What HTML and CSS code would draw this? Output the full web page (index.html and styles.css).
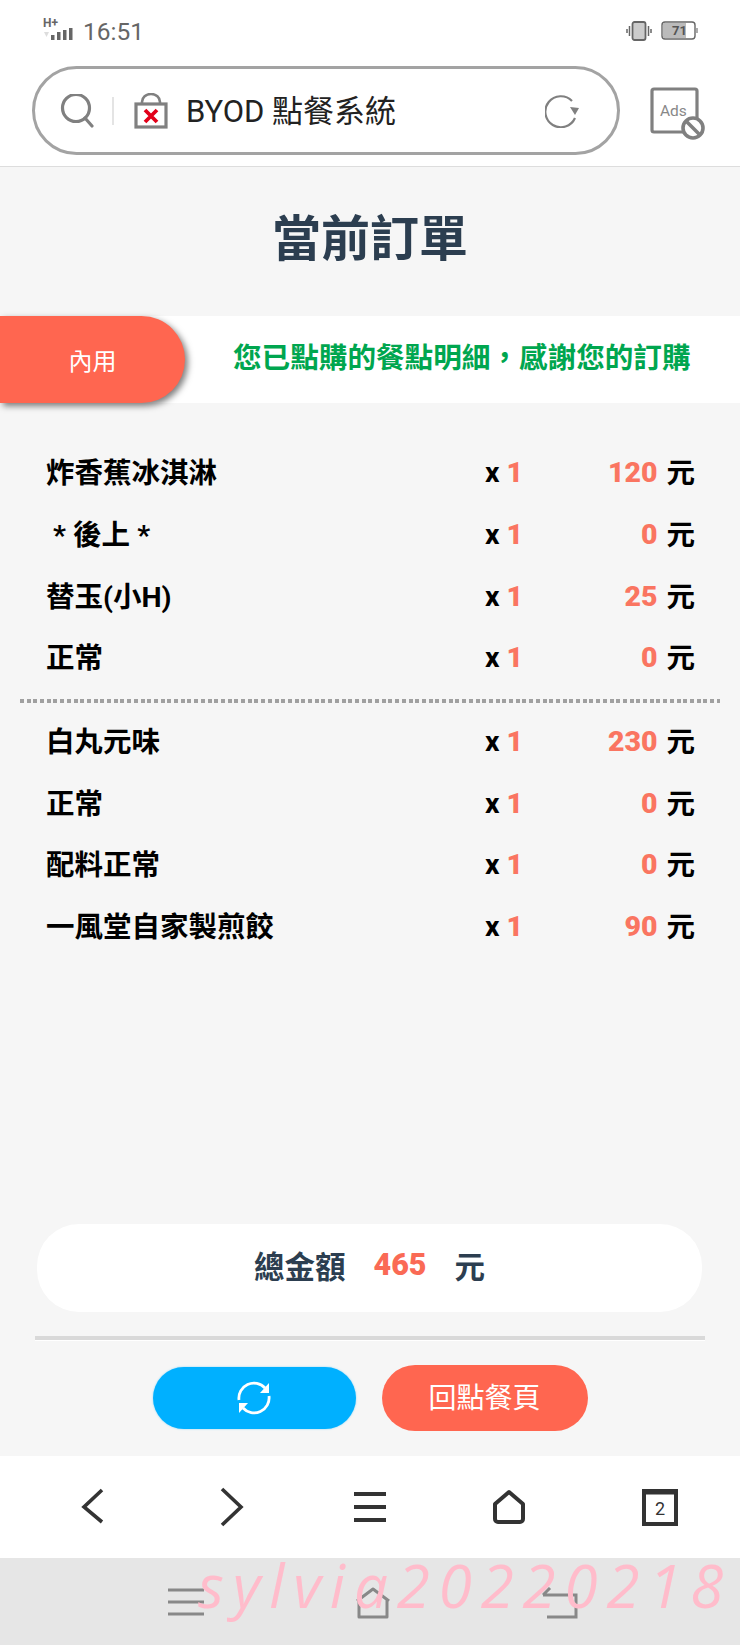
FILE: index.html
```html
<!DOCTYPE html>
<html lang="zh-Hant">
<head>
    <meta charset="UTF-8">
    <meta name="viewport" content="width=device-width, initial-scale=1.0">
    <title>BYOD 點餐系統</title>
    <link rel="stylesheet" href="styles.css">
</head>
<body>
    <header class="top">
        <div class="status">
            <div class="status-left">
                <div class="signal">
                    <span class="signal-text">H+</span>
                    <svg width="33" height="12" viewBox="0 0 33 12">
                        <path d="M1 4h5L3.500 9z" fill="#ddd"/>
                        <rect x="8" y="7" width="3.500" height="5" fill="#666"/>
                        <rect x="14" y="4" width="3.500" height="8" fill="#666"/>
                        <rect x="20" y="2" width="3.500" height="10" fill="#666"/>
                        <rect x="26" y="0" width="3.500" height="12" fill="#666"/>
                    </svg>
                </div>
                <span class="clock">16:51</span>
            </div>
            <div class="status-right">
                <svg width="26" height="20" viewBox="0 0 26 20">
                    <rect x="6.500" y="1" width="13" height="18" rx="2" fill="#ccc" stroke="#666" stroke-width="1.800"/>
                    <path d="M3.500 5v10M1 8v4M22.500 5v10M25 8v4" stroke="#666" stroke-width="1.500"/>
                </svg>
                <svg width="37" height="19" viewBox="0 0 37 19">
                    <rect x="1" y="1" width="33" height="17" rx="3" fill="#fff" stroke="#666" stroke-width="1.400"/>
                    <rect x="2" y="2" width="23" height="15" fill="#bbb"/>
                    <path d="M36 7v5" stroke="#888" stroke-width="1.400"/>
                    <text x="11" y="14" class="battery-text">71</text>
                </svg>
            </div>
        </div>
        <div class="search-row">
            <div class="search">
                <svg class="search-icon" width="34" height="34" viewBox="0 0 34 34" fill="none" stroke="#808080">
                    <circle cx="16" cy="14" r="13.500" stroke-width="3.200"/>
                    <path d="M25 24l7 8" stroke-width="3.200" stroke-linecap="round"/>
                </svg>
                <span class="search-sep"></span>
                <svg class="lock" width="34" height="36" viewBox="0 0 34 36">
                    <path d="M8 12V9a9 8 0 0 1 18 0v3" fill="none" stroke="#808080" stroke-width="2.600"/>
                    <rect x="2" y="11" width="30" height="23" fill="#fff" stroke="#808080" stroke-width="3.200"/>
                    <path d="M11 17l12 12M23 17l-12 12" stroke="#e2001a" stroke-width="3.800"/>
                </svg>
                <span class="search-text">BYOD 點餐系統</span>
                <svg class="reload" width="36" height="34" viewBox="0 0 36 34" fill="none">
                    <path d="M27 7A15.500 15.500 0 1 0 30 24" stroke="#808080" stroke-width="2.200"/>
                    <path d="M25 13l9 1-4 7z" fill="#808080"/>
                </svg>
            </div>
            <svg class="ads" width="56" height="54" viewBox="0 0 56 54">
                <rect x="2" y="2" width="45" height="43" rx="2" fill="#fff" stroke="#808080" stroke-width="3.200"/>
                <text x="10" y="29" class="ads-text">Ads</text>
                <circle cx="43" cy="41" r="10" fill="#fff" stroke="#808080" stroke-width="3.600"/>
                <path d="M36 34l14 14" stroke="#808080" stroke-width="3.600"/>
            </svg>
        </div>
    </header>

    <main class="page">
        <h1 class="title">當前訂單</h1>
        <div class="banner">
            <div class="banner-tag">內用</div>
            <p class="banner-text">您已點購的餐點明細&#xFF0C;感謝您的訂購</p>
        </div>

        <div class="order">
            <div class="row"><span>炸香蕉冰淇淋</span><span>x <b>1</b></span><b class="price">120</b><span>元</span></div>
            <div class="row"><span>&nbsp;* 後上 *</span><span>x <b>1</b></span><b class="price">0</b><span>元</span></div>
            <div class="row"><span>替玉(小H)</span><span>x <b>1</b></span><b class="price">25</b><span>元</span></div>
            <div class="row"><span>正常</span><span>x <b>1</b></span><b class="price">0</b><span>元</span></div>
            <div class="dots"></div>
            <div class="row"><span>白丸元味</span><span>x <b>1</b></span><b class="price">230</b><span>元</span></div>
            <div class="row"><span>正常</span><span>x <b>1</b></span><b class="price">0</b><span>元</span></div>
            <div class="row"><span>配料正常</span><span>x <b>1</b></span><b class="price">0</b><span>元</span></div>
            <div class="row"><span>一風堂自家製煎餃</span><span>x <b>1</b></span><b class="price">90</b><span>元</span></div>
        </div>

        <div class="total">
            <span>總金額</span><b class="total-num">465</b><span>元</span>
        </div>
        <div class="total-line"></div>
        <div class="actions">
            <button class="btn btn-blue" type="button">
                <svg width="38" height="38" viewBox="0 0 38 38" fill="none">
                    <path d="M4 21A15 15 0 0 1 30 9" stroke="#fff" stroke-width="2.800"/>
                    <path d="M34 17A15 15 0 0 1 8 29" stroke="#fff" stroke-width="2.800"/>
                    <path d="M34 4v10H25z" fill="#fff"/>
                    <path d="M4 34V24h9z" fill="#fff"/>
                </svg>
            </button>
            <button class="btn btn-red" type="button">回點餐頁</button>
        </div>
    </main>

    <nav class="browser-nav">
        <svg width="40" height="40" viewBox="0 0 40 40" fill="none" stroke="#333" stroke-width="3.600">
            <path d="M30 3L12 20l18 15"/>
        </svg>
        <svg width="40" height="40" viewBox="0 0 40 40" fill="none" stroke="#333" stroke-width="3.600">
            <path d="M11 2l19 18-19 18"/>
        </svg>
        <svg width="40" height="40" viewBox="0 0 40 40" stroke="#333" stroke-width="4">
            <path d="M4 7h32M4 20h32M4 33h32"/>
        </svg>
        <svg width="40" height="40" viewBox="0 0 40 40" fill="none" stroke="#333" stroke-width="4" stroke-linejoin="round">
            <path d="M20 5L34 17v15a3 3 0 0 1-3 3H9a3 3 0 0 1-3-3V17z"/>
        </svg>
        <svg class="tabs" width="40" height="40" viewBox="0 0 40 40">
            <rect x="4" y="4" width="32" height="33" fill="#fff" stroke="#333" stroke-width="4"/>
            <path d="M3 5h34" stroke="#333" stroke-width="5"/>
            <text x="15" y="28" class="tabs-text">2</text>
        </svg>
    </nav>

    <footer class="system-nav">
        <svg width="36" height="30" viewBox="0 0 36 30" stroke="#888" stroke-width="3">
            <path d="M0 3h36M0 15h36M0 27h36"/>
        </svg>
        <svg width="36" height="32" viewBox="0 0 36 32" fill="none" stroke="#888" stroke-width="3" stroke-linejoin="round">
            <path d="M2 14L18 2l16 12M4 13v17h28V13"/>
        </svg>
        <svg width="36" height="32" viewBox="0 0 36 32" fill="none" stroke="#888" stroke-width="3">
            <path d="M1 8h33v22H5M34 8v22M8 1L1 8"/>
        </svg>
        <div class="watermark">sylvia20220218</div>
    </footer>
</body>
</html>
```
FILE: styles.css
```css
* { margin: 0; padding: 0; box-sizing: border-box; }
body {
    width: 740px;
    height: 1645px;
    display: flex;
    flex-direction: column;
    overflow: hidden;
    background-color: #f6f6f6;
    font-family: Roboto, "Noto Sans CJK TC", sans-serif;
}
svg { display: block; flex: none; }

/* phone status + browser address bar */
.top {
    height: 167px;
    background-color: #fff;
    border-bottom: 1px solid #ddd;
}
.status {
    height: 66px;
    display: flex;
    justify-content: space-between;
    padding: 18px 42px 0 43px;
}
.status-left { display: flex; align-items: flex-start; }
.signal { width: 38px; }
.signal-text {
    display: block;
    height: 10px;
    font-size: 12px;
    font-weight: 700;
    line-height: 11px;
    color: #666;
}
.clock {
    margin-left: 2px;
    font-size: 24.500px;
    line-height: 28px;
    color: #666;
}
.status-right { display: flex; gap: 9px; padding-top: 3px; }
.battery-text { font: 700 13px Roboto, sans-serif; fill: #555; }
.search-row {
    display: flex;
    align-items: center;
    padding-left: 32px;
}
.search {
    width: 588px;
    height: 89px;
    display: flex;
    align-items: center;
    border: 3px solid #a3a3a3;
    border-radius: 45px;
    padding: 0 36px 0 25px;
    background-color: #fff;
}
.search-sep {
    width: 2px;
    height: 28px;
    margin: 0 20px 0 18px;
    background-color: #e4e4e4;
}
.search-text {
    margin-left: 18px;
    padding-bottom: 4px;
    font-size: 31px;
    color: #222;
}
.reload { margin-left: auto; }
.ads { margin: 6px 0 0 30px; }
.ads-text { font: 400 15.500px Roboto, sans-serif; fill: #888; }

/* order page */
.page {
    flex: 1;
    display: flex;
    flex-direction: column;
}
.title {
    margin: 43px 0 46px;
    text-align: center;
    font-size: 49px;
    line-height: 60px;
    color: #2c3e50;
}
.banner {
    height: 87px;
    display: flex;
    align-items: center;
    background-color: #fff;
}
.banner-tag {
    width: 185px;
    height: 87px;
    display: flex;
    align-items: center;
    justify-content: center;
    border-radius: 0 44px 44px 0;
    background-color: #ff6650;
    box-shadow: 3px 3px 6px rgba(0, 0, 0, 0.5);
    font-size: 24px;
    color: #fff;
}
.banner-text {
    margin-left: 48px;
    padding-bottom: 8px;
    font-size: 28.600px;
    font-weight: 700;
    color: #00a64f;
    white-space: nowrap;
}
.order { margin-top: 39px; }
.row {
    height: 61.700px;
    display: grid;
    grid-template-columns: 439px auto 1fr auto;
    align-items: center;
    padding: 0 45px 0 46px;
    font-size: 28.500px;
    font-weight: 700;
    color: #000;
}
.row > span:first-child,
.row > span:last-child { margin-bottom: 4px; }
.row b { color: #fa7561; }
.row .price { text-align: right; margin-right: 9px; }
.dots {
    height: 4px;
    margin: 10px 20px 8px;
    background-image: repeating-linear-gradient(90deg, #a0a0a0 0 4px, transparent 4px 6.700px);
}
.total {
    height: 88px;
    margin: auto 38px 0 37px;
    padding-bottom: 7px;
    display: flex;
    align-items: center;
    justify-content: center;
    border-radius: 42px;
    background-color: #fff;
    font-size: 30.500px;
    font-weight: 700;
    color: #2c3e50;
}
.total-num {
    margin: 0 28px;
    color: #fa6a55;
}
.total-line {
    height: 5px;
    margin: 24px 35px 0;
    background-color: #d9d9d9;
    border-bottom: 1px solid #fff;
}
.actions {
    display: flex;
    align-items: center;
    justify-content: center;
    gap: 26px;
    height: 66px;
    margin: 24px 0 25px;
}
.btn {
    display: flex;
    align-items: center;
    justify-content: center;
    border: none;
    border-radius: 33px;
    font-family: inherit;
    font-size: 28px;
    color: #fff;
}
.btn-blue {
    width: 203px;
    height: 62px;
    background-color: #00b0ff;
    box-shadow: 0 0 2px #7fd0f5;
}
.btn-red {
    width: 206px;
    height: 66px;
    padding-bottom: 4px;
    background-color: #ff6650;
}

/* browser toolbar + android keys */
.browser-nav {
    height: 102px;
    display: flex;
    align-items: center;
    gap: 99px;
    padding-left: 72px;
    background-color: #fff;
}
.browser-nav .tabs { margin-left: 12px; }
.tabs-text { font: 400 18px Roboto, sans-serif; fill: #333; }
.system-nav {
    position: relative;
    height: 87px;
    display: flex;
    align-items: flex-start;
    padding: 29px 0 0 168px;
    gap: 151px;
    background-color: #e6e6e6;
}
/* pink signature painted over the keys */
.watermark {
    position: absolute;
    left: 198px;
    top: -13px;
    font-family: "Open Sans", sans-serif;
    font-style: italic;
    font-size: 60px;
    line-height: 80px;
    letter-spacing: 8.900px;
    color: #ffbccb;
    white-space: nowrap;
}
```
